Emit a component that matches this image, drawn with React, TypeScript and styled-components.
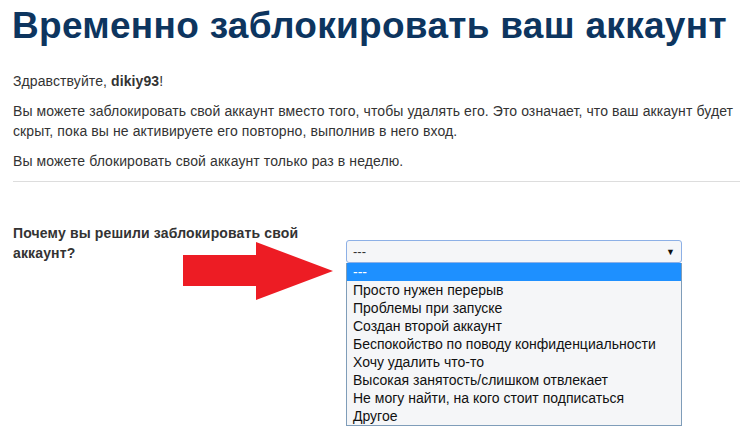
import React from "react";
import styled, { createGlobalStyle } from "styled-components";

const GlobalStyle = createGlobalStyle`
  html, body {
    margin: 0;
    padding: 0;
    background: #ffffff;
  }
  body {
    font-family: "Liberation Sans", Arial, sans-serif;
    color: #333333;
  }
`;

const reasons = [
  "---",
  "Просто нужен перерыв",
  "Проблемы при запуске",
  "Создан второй аккаунт",
  "Беспокойство по поводу конфиденциальности",
  "Хочу удалить что-то",
  "Высокая занятость/слишком отвлекает",
  "Не могу найти, на кого стоит подписаться",
  "Другое",
];

function App() {
  return (
    <>
      <GlobalStyle />
      <Page>
        <Title>Временно заблокировать ваш аккаунт</Title>
        <Text>
          Здравствуйте, <b>dikiy93</b>!
        </Text>
        <Text>
          Вы можете заблокировать свой аккаунт вместо того, чтобы удалять его.
          Это означает, что ваш аккаунт будет скрыт, пока вы не активируете его
          повторно, выполнив в него вход.
        </Text>
        <Text>Вы можете блокировать свой аккаунт только раз в неделю.</Text>
        <Divider />

        <FormRow>
          <Label>Почему вы решили заблокировать свой аккаунт?</Label>
          <SelectWrap>
            <SelectBox>
              <span>---</span>
              <Caret>▼</Caret>
            </SelectBox>
            <OptionList>
              {reasons.map((r, i) => (
                <Option key={r} $active={i === 0}>
                  {r}
                </Option>
              ))}
            </OptionList>
          </SelectWrap>
          <Arrow width="152" height="60" viewBox="0 0 152 60">
            <polygon
              points="0,13 73,13 73,0 150,29 73,58 73,44 0,44"
              fill="#ed1c24"
            />
          </Arrow>
        </FormRow>
      </Page>
    </>
  );
}

const Page = styled.div`
  box-sizing: border-box;
  min-height: 435px;
  padding: 0 11px 0 13px;
  overflow: hidden;
`;

const Title = styled.h1`
  margin: 0 0 0 -1px;
  padding-top: 4px;
  font-family: "Liberation Sans", Arial, sans-serif;
  font-weight: bold;
  font-size: 37px;
  line-height: 43px;
  letter-spacing: 0.3px;
  color: #0d355f;
  white-space: nowrap;
`;

const Text = styled.p`
  margin: 0 0 10px;
  font-size: 14px;
  line-height: 20px;
  letter-spacing: 0.1px;
  color: #333333;

  &:first-of-type {
    margin-top: 24px;
  }

  b {
    font-weight: bold;
  }
`;

const Divider = styled.div`
  height: 1px;
  background: #dddddd;
  margin-top: 10px;
`;

const FormRow = styled.div`
  position: relative;
  display: grid;
  grid-template-columns: 333px 336px;
  margin-top: 41px;
`;

const Label = styled.div`
  font-weight: bold;
  font-size: 14px;
  line-height: 20px;
  letter-spacing: 0.15px;
  color: #333333;
  width: 320px;
`;

const SelectWrap = styled.div`
  position: relative;
  margin-top: 17px;
`;

const SelectBox = styled.div`
  box-sizing: border-box;
  height: 23px;
  display: flex;
  align-items: center;
  justify-content: space-between;
  padding: 0 6px 0 6px;
  background: #f5f6f8;
  border: 1px solid #8db0e6;
  border-radius: 3px;
  font-size: 13px;
  color: #333333;
`;

const Caret = styled.span`
  font-size: 9px;
  color: #111111;
`;

const OptionList = styled.div`
  position: absolute;
  top: 23px;
  left: 0;
  right: 0;
  box-sizing: border-box;
  background: #f5f6f8;
  border: 1px solid #7f9db9;
  border-top: none;
`;

const Option = styled.div<{ $active?: boolean }>`
  height: 18px;
  line-height: 18px;
  padding: 0 6px;
  font-size: 14px;
  white-space: nowrap;
  color: ${(p) => (p.$active ? "#ffffff" : "#111111")};
  background: ${(p) => (p.$active ? "#1e90ff" : "transparent")};
`;

const Arrow = styled.svg`
  position: absolute;
  left: 170px;
  top: 19px;
`;

export default App;
